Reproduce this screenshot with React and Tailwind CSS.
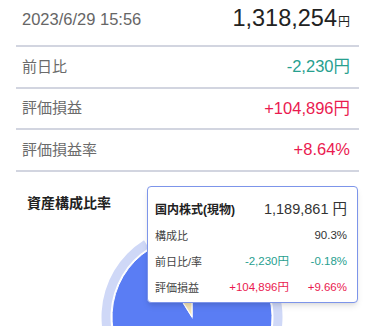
import React from "react";

const rows = [
  { label: "前日比", value: "-2,230円", tone: "text-[#27a08f]" },
  { label: "評価損益", value: "+104,896円", tone: "text-[#ea1a4f]" },
  { label: "評価損益率", value: "+8.64%", tone: "text-[#ea1a4f]" },
];

const tipRows = [
  { label: "構成比", yen: "", pct: "90.3%", tone: "text-[#333]" },
  { label: "前日比/率", yen: "-2,230円", pct: "-0.18%", tone: "text-[#27a08f]" },
  { label: "評価損益", yen: "+104,896円", pct: "+9.66%", tone: "text-[#ea1a4f]" },
];

const Divider = () => <div className="mx-4 h-[2px] bg-[#d2d5e0]" />;

const Pie = () => (
  <svg width="190" height="190" viewBox="0 0 190 190">
    <path
      d="M95 4.5 A90.5 90.5 0 1 1 47.04 18.26 L51.81 25.89 A81.5 81.5 0 1 0 95 13.5 Z"
      fill="#cfd8f7"
    />
    <path
      d="M95 95 L95 15 A80 80 0 1 1 52.61 27.16 Z"
      fill="#5a7df4"
      stroke="#fff"
      strokeWidth="1"
    />
    <path
      d="M95 95 L52.61 27.16 A80 80 0 0 1 95 15 Z"
      fill="#f4e4b4"
      stroke="#fff"
      strokeWidth="1.2"
    />
  </svg>
);

const App = () => {
  return (
    <div
      className="relative w-[375px] h-[326px] overflow-hidden bg-white"
      style={{ fontFamily: '"Liberation Sans", "Noto Sans CJK JP", sans-serif' }}
    >
      <div className="mx-4 h-[45px] pb-[7px] pl-[6px] pr-[9px] flex items-center justify-between">
        <span className="text-[16.5px] text-[#666]">2023/6/29 15:56</span>
        <span className="text-[#222] flex items-baseline">
          <span className="text-[23.5px] leading-none">1,318,254</span>
          <span className="text-[12px] ml-[1px]">円</span>
        </span>
      </div>
      <Divider />
      {rows.map(({ label, value, tone }, index) => (
        <div key={index}>
          <div className="mx-4 h-[39.5px] pl-[6px] pr-[9px] flex items-center justify-between">
            <span className="text-[15px] text-[#6b6b6b]">{label}</span>
            <span className={`text-[16.5px] ${tone}`}>{value}</span>
          </div>
          <Divider />
        </div>
      ))}

      <div className="pl-[27px] mt-[21px] text-[14px] leading-[20px] font-bold text-[#222]">
        資産構成比率
      </div>
      <div className="ml-[97px] mt-[9px]">
        <Pie />
      </div>

      <div className="absolute top-[186px] left-[147px] w-[211px] h-[117px] bg-white border border-[#7d95ea] rounded-[4px] shadow-md pt-[10px] pl-[7px] pr-[10px]">
        <div className="h-[26px] flex items-center justify-between">
          <span className="text-[12px] font-bold text-[#222]">国内株式(現物)</span>
          <span className="text-[14.5px] text-[#333]">1,189,861 円</span>
        </div>
        {tipRows.map(({ label, yen, pct, tone }, index) => (
          <div key={index} className="h-[26px] flex items-center justify-between">
            <span className="text-[11px] text-[#444]">{label}</span>
            <span className={`flex items-center text-[11.5px] ${tone}`}>
              {yen && <span>{yen}</span>}
              <span className="w-[58px] text-right">{pct}</span>
            </span>
          </div>
        ))}
      </div>
    </div>
  );
};

export default App;
